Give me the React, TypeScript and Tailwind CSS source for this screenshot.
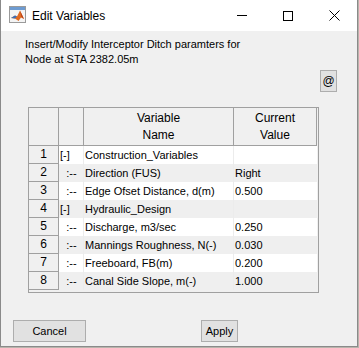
import React from "react";

type Row = { n: number; tree: string; name: string; value: string };

const rows: Row[] = [
  { n: 1, tree: "[-]", name: "Construction_Variables", value: "" },
  { n: 2, tree: ":--", name: "Direction (FUS)", value: "Right" },
  { n: 3, tree: ":--", name: "Edge Ofset Distance, d(m)", value: "0.500" },
  { n: 4, tree: "[-]", name: "Hydraulic_Design", value: "" },
  { n: 5, tree: ":--", name: "Discharge, m3/sec", value: "0.250" },
  { n: 6, tree: ":--", name: "Mannings Roughness, N(-)", value: "0.030" },
  { n: 7, tree: ":--", name: "Freeboard, FB(m)", value: "0.200" },
  { n: 8, tree: ":--", name: "Canal Side Slope, m(-)", value: "1.000" },
];

const font = { fontFamily: '"Liberation Sans", Arial, sans-serif' };

const MatlabIcon = () => (
  <svg width="17" height="17" viewBox="0 0 17 17">
    <rect x="0.5" y="0.5" width="16" height="16" fill="#f4f4f4" stroke="#9a9a9a" />
    <rect x="1" y="1" width="15" height="3" fill="#6d9bd1" />
    <path d="M2 12 L6 9.5 L8 10.5 L11 4.5 L15 13 L12 11.5 L9.5 15 L6 12.5 Z" fill="#e16a1f" />
    <path d="M2 12 L6 9.5 L8 10.5 L6 12.5 Z" fill="#3a6fb7" />
    <path d="M11 4.5 L12.5 11 L15 13 Z" fill="#b9401a" />
  </svg>
);

export default function App() {
  return (
    <div className="w-[359px] h-[348px] bg-[#b8b4ac] overflow-hidden" style={font}>
      <div className="w-[358px] h-[347px] flex flex-col border-x border-b border-[#8a8a8a] bg-[#f0f0f0]">
        {/* title bar */}
        <div className="h-[31px] bg-white flex items-center shrink-0">
          <div className="ml-[8px] mt-[-2px]">
            <MatlabIcon />
          </div>
          <span className="ml-[6px] text-[12px] text-black">Edit Variables</span>
          <div className="ml-auto flex h-full">
            <div className="w-[46px] h-full flex items-center justify-center">
              <div className="w-[10px] h-px bg-black" />
            </div>
            <div className="w-[46px] h-full flex items-center justify-center">
              <div className="w-[10px] h-[10px] border border-black" />
            </div>
            <div className="w-[46px] h-full flex items-center justify-center">
              <svg width="11" height="11" viewBox="0 0 11 11">
                <path d="M0.5 0.5 L10.5 10.5 M10.5 0.5 L0.5 10.5" stroke="#000" strokeWidth="1" />
              </svg>
            </div>
          </div>
        </div>

        {/* body */}
        <div className="flex-1 flex flex-col pt-[6px] text-[11px] text-black">
          <p className="pl-[24px] leading-[15px]">
            Insert/Modify Interceptor Ditch paramters for
            <br />
            Node at STA 2382.05m
          </p>

          <div className="flex justify-end pr-[20px] mt-[3px]">
            <button className="w-[17px] h-[22px] bg-[#e1e1e1] border border-[#adadad] text-[12px] leading-none flex items-center justify-center">
              @
            </button>
          </div>

          {/* table */}
          <div className="ml-[27px] mt-[15px] w-[291px] h-[186px] border border-[#a0a0a0] pr-px bg-[#f0f0f0]">
            <div className="flex h-[38px] text-[12px] leading-[17px]">
              <div className="w-[30px] border-r border-b border-[#a0a0a0]" />
              <div className="w-[25px] border-r border-b border-[#a0a0a0]" />
              <div className="w-[150px] border-r border-b border-[#a0a0a0] flex items-center justify-center text-center">
                Variable
                <br />
                Name
              </div>
              <div className="w-[83px] border-r border-b border-[#a0a0a0] flex items-center justify-center text-center">
                Current
                <br />
                Value
              </div>
            </div>
            {rows.map((r) => {
              const bg = r.n % 2 === 1 ? "bg-white" : "bg-[#efefef]";
              return (
                <div key={r.n} className="flex h-[18px] leading-[18px]">
                  <div className="w-[30px] border-r border-b border-[#a0a0a0] bg-[#f0f0f0] text-center text-[12px] leading-[17px]">
                    {r.n}
                  </div>
                  <div
                    className={`w-[25px] border-r border-[#ececec] ${bg} ${
                      r.tree === "[-]" ? "pl-[1px]" : "text-center pl-[1px]"
                    }`}
                  >
                    {r.tree}
                  </div>
                  <div className={`w-[150px] border-r border-[#ececec] ${bg} pl-[1px] whitespace-nowrap overflow-hidden`}>
                    {r.name}
                  </div>
                  <div className={`w-[83px] ${bg} pl-[1px]`}>{r.value}</div>
                </div>
              );
            })}
          </div>

          {/* buttons */}
          <div className="mt-auto mb-[4px] flex">
            <button className="ml-[12px] w-[73px] h-[22px] bg-[#e1e1e1] border border-[#adadad] text-[11px]">
              Cancel
            </button>
            <button className="ml-[115px] w-[37px] h-[22px] bg-[#e1e1e1] border border-[#adadad] text-[11px]">
              Apply
            </button>
          </div>
        </div>
      </div>
    </div>
  );
}
